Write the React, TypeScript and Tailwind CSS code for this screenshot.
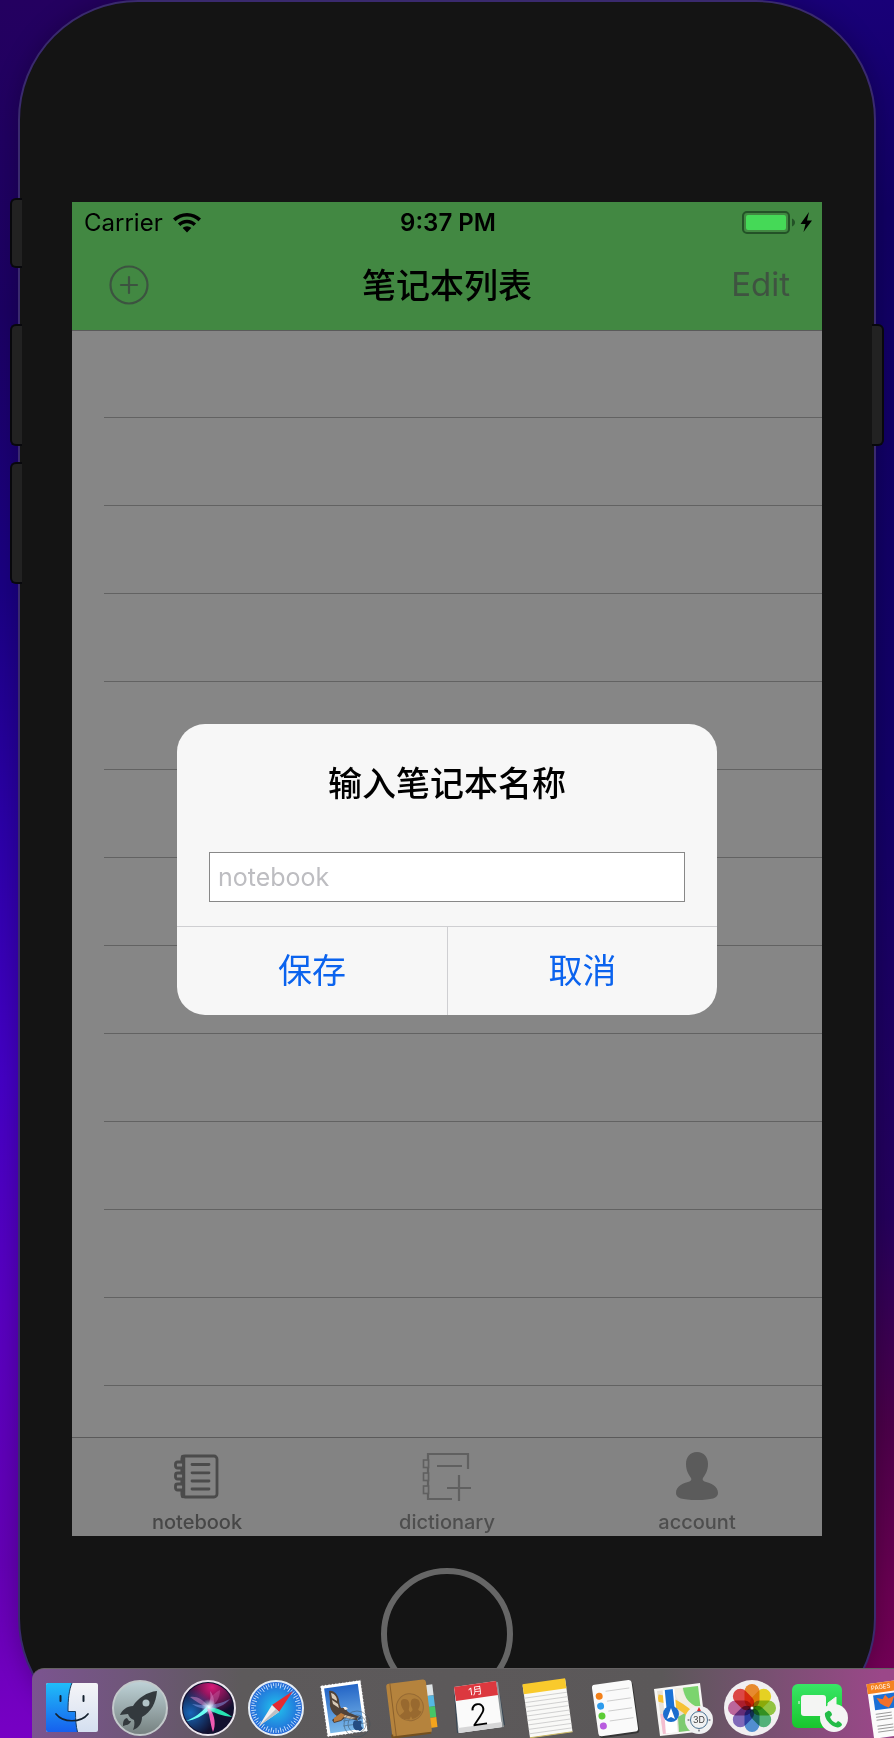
import type { ReactNode } from "react";

function Wifi() {
  return (
    <svg viewBox="0 0 28 20" className="h-5 w-7" aria-hidden="true">
      <path d="M14 0C8.600 0 3.700 2.100 0 5.600l2.500 2.600C5.500 5.300 9.500 3.600 14 3.600s8.500 1.700 11.500 4.600L28 5.600C24.300 2.100 19.400 0 14 0z" />
      <path d="M14 6.700c-3.500 0-6.700 1.400-9.100 3.700l2.500 2.600c1.700-1.700 4.100-2.700 6.600-2.700s4.900 1 6.600 2.700l2.500-2.600C20.700 8.100 17.500 6.700 14 6.700z" />
      <path d="M14 13.300c-1.700 0-3.200.7-4.300 1.700L14 19.600l4.300-4.600c-1.100-1-2.600-1.700-4.300-1.700z" />
    </svg>
  );
}

function Battery() {
  return (
    <svg viewBox="0 0 70 24" className="h-6 w-[70px]" role="img" aria-label="Charging">
      <rect x="1" y="1" width="46" height="21" rx="4" fill="none" stroke="#235227" strokeWidth="2" />
      <rect x="4" y="4" width="40" height="15" rx="2" fill="#45d957" />
      <path d="M50 7.500c4 1.500 4 6.500 0 8z" fill="#235227" />
      <path d="M67 1l-8.500 12h5l-2 8L70 9.500h-5z" fill="#000" />
    </svg>
  );
}

function NotebookIcon() {
  return (
    <svg viewBox="0 0 46 46" className="h-[46px] w-[46px]" fill="none" stroke="#4b4b4b" strokeWidth="2.800" strokeLinecap="round" aria-hidden="true">
      <rect x="8" y="2" width="35" height="41" rx="3" />
      <path d="M9 3v39" strokeWidth="4.500" />
      <rect x="1.500" y="8" width="8" height="6" rx="2" fill="#838383" />
      <rect x="1.500" y="19" width="8" height="6" rx="2" fill="#838383" />
      <rect x="1.500" y="30" width="8" height="6" rx="2" fill="#838383" />
      <path d="M18 10.500h17M18 18.800h17M18 27h17M18 35h17" />
    </svg>
  );
}

function DictionaryIcon() {
  return (
    <svg viewBox="0 0 50 50" className="h-[50px] w-[50px]" fill="none" stroke="#606060" strokeWidth="2.200" aria-hidden="true">
      <path d="M46 18V3H6v45h24M15 15h25M25 37h24M37 24v26" />
      <g fill="#838383" strokeWidth="1.600">
        <rect x="1.500" y="9" width="5" height="7.500" />
        <rect x="1.500" y="22" width="5" height="7.500" />
        <rect x="1.500" y="35" width="5" height="7.500" />
      </g>
    </svg>
  );
}

function AccountIcon() {
  return (
    <svg viewBox="0 0 42 48" className="h-12 w-[42px]" fill="#5b5b5b" aria-hidden="true">
      <path d="M21 0c7 0 11 5 11 12 0 7-3 11-5 14-.8 1.500-.3 2.500 1.500 3.500C35 31 42 34 42 41c0 5-6 7-21 7S0 46 0 41c0-7 7-10 13.500-11.500 1.800-1 2.300-2 1.500-3.500-2-3-5-7-5-14C10 5 14 0 21 0z" />
    </svg>
  );
}

function Finder() {
  return (
    <svg viewBox="0 0 56 60" className="h-[60px] w-14" aria-hidden="true">
      <defs>
        <linearGradient id="finderBlue" x1="0" y1="0" x2="0" y2="1">
          <stop offset="0" stopColor="#20bdf8" />
          <stop offset="1" stopColor="#1660ee" />
        </linearGradient>
        <linearGradient id="finderPale" x1="0" y1="0" x2="0" y2="1">
          <stop offset="0" stopColor="#f5f5f8" />
          <stop offset="1" stopColor="#d4dff0" />
        </linearGradient>
      </defs>
      <rect x="2" y="5" width="52" height="49" rx="2" fill="url(#finderPale)" />
      <path d="M28 5H4a2 2 0 0 0-2 2v45a2 2 0 0 0 2 2h29.500c-1.500-6-2-12-2-20.500h-7.500C24 21 25 12 28 5z" fill="url(#finderBlue)" />
      <path d="M28 5c-3 7-4 16-4 28.500h7.500c0 8.500.5 14.500 2 20.500" fill="none" stroke="#173d62" strokeWidth="1" />
      <path d="M16.500 18v5M39.500 18v5" stroke="#14212e" strokeWidth="2" strokeLinecap="round" />
      <path d="M12 36c7 9 25 9 32 0" fill="none" stroke="#14212e" strokeWidth="1.700" strokeLinecap="round" />
    </svg>
  );
}

function Launchpad() {
  return (
    <svg viewBox="0 0 60 60" className="h-[60px] w-[60px]" aria-hidden="true">
      <defs>
        <linearGradient id="launch" x1="0" y1="0" x2="0" y2="1">
          <stop offset="0" stopColor="#bfd3d8" />
          <stop offset="1" stopColor="#75807f" />
        </linearGradient>
      </defs>
      <circle cx="30" cy="30" r="27" fill="url(#launch)" stroke="#c3c9cb" strokeWidth="2" />
      <path d="M47 13c-10 1-19 7-24 15-6 0-11 4-13 9l8-1c1 3 3 5 6 6 1 4 0 7-1 10 6-2 9-7 9-13 9-5 14-14 15-26z" fill="#33393d" />
      <circle cx="36" cy="25" r="3.500" fill="#b2c3c7" />
      <path d="M17 40c-4 1-4 5-4 8 3-1 7-1 8-5l-2 0z" fill="#33393d" />
    </svg>
  );
}

function Siri() {
  return (
    <svg viewBox="0 0 60 60" className="h-[60px] w-[60px]" aria-hidden="true">
      <defs>
        <radialGradient id="siriPink" cx=".58" cy=".08" r=".55">
          <stop offset="0" stopColor="#d81878" />
          <stop offset="1" stopColor="#d81878" stopOpacity="0" />
        </radialGradient>
        <radialGradient id="siriBlue" cx=".15" cy=".6" r=".5">
          <stop offset="0" stopColor="#1866b8" />
          <stop offset="1" stopColor="#1866b8" stopOpacity="0" />
        </radialGradient>
        <radialGradient id="siriGlow">
          <stop offset="0" stopColor="#fff" />
          <stop offset="1" stopColor="#9fe8ff" stopOpacity="0" />
        </radialGradient>
      </defs>
      <circle cx="30" cy="30" r="27" fill="#12102f" stroke="#ebe6ee" strokeWidth="2" />
      <circle cx="30" cy="30" r="25" fill="url(#siriPink)" />
      <circle cx="30" cy="30" r="25" fill="url(#siriBlue)" />
      <path d="M31 29C24 20 18 18 12 19c5 4 12 8 19 12 7-3 6-12 1-18 1 5 0 11-1 16z" fill="#d889c9" opacity=".5" />
      <path d="M30 30C30 22 34 16 42 12c0 8-4 15-12 18z" fill="#d46fb4" opacity=".35" />
      <path d="M30 27C23 35 16 40 8 43c9-1 17-5 24-12z" fill="#64fff2" />
      <path d="M29 29c9 0 17 4 25 10-9-1-18-4-25-8z" fill="#27e3b3" />
      <path d="M29 31c3 6 3 14 6 23 3-7 2-16-3-23z" fill="#f05bb2" />
      <path d="M14 26c11 2 24 2 38-5-9 11-26 13-38 5z" fill="#8caeff" opacity=".45" />
      <circle cx="31" cy="29" r="8" fill="url(#siriGlow)" />
    </svg>
  );
}

const ticks = Array.from({ length: 60 }, (_, i) => i * 6);

function Safari() {
  return (
    <svg viewBox="0 0 60 60" className="h-[60px] w-[60px]" aria-hidden="true">
      <defs>
        <radialGradient id="safari">
          <stop offset="0" stopColor="#21c5ed" />
          <stop offset="1" stopColor="#2364d7" />
        </radialGradient>
      </defs>
      <circle cx="30" cy="30" r="27" fill="url(#safari)" stroke="#e5edf5" strokeWidth="2" />
      <g stroke="#d9ecff" strokeWidth=".8">
        {ticks.map((a) => (
          <path key={a} d={a % 12 === 0 ? "M30 5v5" : "M30 5v3"} transform={`rotate(${a} 30 30)`} />
        ))}
      </g>
      <path d="M47 13L26 27l7 7z" fill="#e62a31" />
      <path d="M13 48l13-21 7 7z" fill="#f3efee" />
      <path d="M13 48l17-17 3 3z" fill="#bebfc3" />
    </svg>
  );
}

function Mail() {
  return (
    <svg viewBox="0 0 60 60" className="h-[60px] w-[60px]" aria-hidden="true">
      <defs>
        <linearGradient id="mail" x1="0" y1="0" x2="0" y2="1">
          <stop offset="0" stopColor="#2465c6" />
          <stop offset="1" stopColor="#7bb9ea" />
        </linearGradient>
      </defs>
      <g transform="rotate(-8 30 30)">
        <rect x="9" y="4" width="42" height="53" fill="#fff" />
        <rect x="9" y="4" width="42" height="53" fill="none" stroke="#5d5a5b" strokeWidth="2" strokeDasharray="1.500 2" strokeLinecap="round" />
        <rect x="13" y="8" width="34" height="45" fill="url(#mail)" />
      </g>
      <path d="M15 13c5-1 9 4 10 9 0 3 1 6 2 8l4 0c2 2 2 4 5 5l10 4-3 1 1 3-6-2-7-1-4 3-7 2-2-3 5-4c-5-3-8-9-7-14z" fill="#514238" />
      <path d="M17 15c4 1 6 4 6 8l-5-3zM18 22l6 4 1 4-6-4z" fill="#d9cbb9" />
      <path d="M31 37l11 3-5 1-8-2z" fill="#ccb89e" />
      <path d="M20 40l7-5 4 2-4 5-7 2z" fill="#b87a3e" />
      <path d="M29 29l3 0 2 2-3 1z" fill="#f4ece0" />
      <g fill="none" stroke="#3d505e" opacity=".5">
        <circle cx="43" cy="46" r="13" />
        <circle cx="43" cy="46" r="9" />
        <path d="M29 43l20-3M29 48l22-3" />
      </g>
      <path d="M40 43c2-1 4 0 4 0s3-1 4 1c-2 2-1 5 1 6-2 4-4 3-5 2-2 1-5-1-5-5 0-2 0-3 1-4zM44 42c0-2 1-3 3-4 0 2-1 4-3 4z" fill="#244d83" />
    </svg>
  );
}

function Contacts() {
  return (
    <svg viewBox="0 0 60 60" className="h-[60px] w-[60px]" aria-hidden="true">
      <g transform="rotate(-7 30 30)">
        <rect x="44" y="9" width="9" height="11" fill="#dde2e4" />
        <rect x="44" y="20" width="9" height="11" fill="#55b8e4" />
        <rect x="44" y="31" width="9" height="11" fill="#45c667" />
        <rect x="44" y="42" width="9" height="10" fill="#f3a31c" />
        <rect x="7" y="3" width="40" height="54" rx="3" fill="#b5833d" />
        <path d="M11 3v54" stroke="#8b602b" />
        <path d="M7 54v2q0 1 2 1h37" fill="none" stroke="#74501f" strokeWidth="2" />
        <circle cx="28" cy="29" r="13.500" fill="#af7e3a" stroke="#966a34" />
        <path d="M23 20c5 0 6 5 4 10-1 2 0 3 1 4 2-1 3-2 2-4-2-5 0-10 4-9 6 1 5 8 2 11 0 2 2 2 3 3-3 4-6 6-10 6l-1-3-2 3c-4 0-8-2-9-5 2-2 4-2 5-4-3-5-4-12 1-12z" fill="#98692f" />
      </g>
    </svg>
  );
}

function Calendar() {
  return (
    <div className="relative h-[60px] w-[60px]">
      <svg viewBox="0 0 60 60" className="h-[60px] w-[60px]" aria-hidden="true">
        <path d="M4 13l44-8 7 42-48 8z" fill="#354452" />
        <path d="M5 11l43-7 6 45-46 6z" fill="#8f9699" />
        <path d="M4 9l42-6 6 46-43 6z" fill="#fafafa" />
        <path d="M4 9l42-6 2 14-42 6z" fill="#dc383f" />
        <path d="M8 50l44-6v5l-43 6z" fill="#d6d6d7" />
      </svg>
      <div className="absolute inset-0 flex -rotate-8 flex-col items-center pt-1 pr-1 text-center">
        <span className="text-[10px] leading-4 text-white">1月</span>
        <span className="text-[30px] leading-8 font-light text-black">2</span>
      </div>
    </div>
  );
}

function Notes() {
  return (
    <svg viewBox="0 0 60 60" className="h-[60px] w-[60px]" aria-hidden="true">
      <g transform="rotate(-8 30 30)">
        <rect x="8" y="4" width="43" height="53" fill="#f9f9f7" />
        <rect x="8" y="3" width="43" height="10" fill="#f9ca2c" />
        <path d="M8 17h43M8 21.500h43M8 26h43M8 30.500h43M8 35h43M8 39.500h43M8 44h43M8 48.500h43M8 53h43" stroke="#c9c9c9" strokeWidth=".8" />
        <path d="M8 57h43" stroke="#c9b763" />
      </g>
    </svg>
  );
}

function Reminders() {
  return (
    <svg viewBox="0 0 60 60" className="h-[60px] w-[60px]" aria-hidden="true">
      <g transform="rotate(-8 30 30)">
        <rect x="10" y="6" width="40" height="52" rx="3" fill="#353535" />
        <rect x="9" y="4" width="40" height="52" rx="3" fill="#fafafa" />
        <path d="M22 12h24M22 22h24M22 32h24M22 42h24" stroke="#c5c5c5" strokeWidth=".8" />
        <circle cx="15" cy="16" r="3.500" fill="#f38019" />
        <circle cx="15" cy="26" r="3.500" fill="#2d9bec" />
        <circle cx="15" cy="36" r="3.500" fill="#5ccc35" />
        <circle cx="15" cy="46" r="3.500" fill="#b95cdf" />
      </g>
    </svg>
  );
}

function Maps() {
  return (
    <div className="relative h-[60px] w-[60px]">
      <svg viewBox="0 0 60 60" className="h-[60px] w-[60px]" aria-hidden="true">
        <defs>
          <clipPath id="mapClip">
            <path d="M3 13l41-5 5 43-40 5z" />
          </clipPath>
        </defs>
        <path d="M0 11l46-6 6 48-46 5z" fill="#f7f6f4" />
        <g clipPath="url(#mapClip)">
          <path d="M0 0h60v60H0z" fill="#e7e2d8" />
          <path d="M28 3h25v35C36 32 29 19 28 3z" fill="#7bd46e" />
          <path d="M24 5c-1 17 12 29 30 31" fill="none" stroke="#f2eee2" strokeWidth="8" />
          <path d="M24 39l12-7 16 22H25z" fill="#7ecb71" />
          <path d="M3 36h12v22H3z" fill="#f4bed0" />
          <path d="M4 20c13 2 25 8 36 20" fill="none" stroke="#f6c234" strokeWidth="7" />
          <path d="M14 4l4 53" stroke="#fff" strokeWidth="12" />
          <path d="M14 4l3 31" stroke="#1972d5" strokeWidth="8" />
        </g>
        <circle cx="17" cy="36" r="8" fill="#1b6dce" />
        <path d="M17 30l4 11-4-2-4 2z" fill="#fff" />
        <circle cx="45" cy="42" r="14" fill="#f0f1f2" />
        <circle cx="45" cy="42" r="8.500" fill="none" stroke="#4b7191" />
        <path d="M45 29l2 4h-4z" fill="#e42d2c" />
        <path d="M34 42h1M55 42h1M45 52v1" stroke="#334" strokeLinecap="round" />
      </svg>
      <span className="absolute top-[35px] left-[37px] w-4 text-center text-[9px] leading-[14px] text-[#3a3a3a]">3D</span>
    </div>
  );
}

const petals = ["#f59331", "#f3df25", "#9bd044", "#58bd80", "#5798dc", "#8770c4", "#c66da4", "#e94b49"];

function Photos() {
  return (
    <svg viewBox="0 0 60 60" className="h-[60px] w-[60px]" aria-hidden="true">
      <circle cx="30" cy="30" r="28" fill="#f1eff1" />
      {petals.map((c, i) => (
        <rect key={c} x="22.500" y="6" width="15" height="24" rx="7.500" fill={c} className="mix-blend-multiply" transform={`rotate(${i * 45} 30 30)`} />
      ))}
      <circle cx="30" cy="30" r="1.500" fill="#fff" />
    </svg>
  );
}

function FaceTime() {
  return (
    <svg viewBox="0 0 60 60" className="h-[60px] w-[60px]" aria-hidden="true">
      <defs>
        <linearGradient id="face" x1="0" y1="0" x2="0" y2="1">
          <stop offset="0" stopColor="#38e666" />
          <stop offset="1" stopColor="#18c62d" />
        </linearGradient>
      </defs>
      <rect x="2" y="6" width="50" height="44" rx="6" fill="url(#face)" />
      <rect x="11" y="17" width="25" height="21" rx="3" fill="#f4f5f3" />
      <path d="M9 23v3M38 25l8-6v16l-8-6z" fill="#f4f5f3" stroke="#f4f5f3" />
      <circle cx="44" cy="40" r="14" fill="#f4f5f4" />
      <path d="M38 33c2-1 4 2 4 4l-2 2c1 3 3 5 6 6l2-2c2 1 4 2 4 4-2 3-5 3-9 1-5-3-9-9-8-13z" fill="#22bc47" />
    </svg>
  );
}

function Pages() {
  return (
    <div className="relative h-[60px] w-[60px]">
      <svg viewBox="0 0 60 60" className="h-[60px] w-[60px]" aria-hidden="true">
        <g transform="rotate(-8 34 30)">
          <rect x="12" y="3" width="44" height="55" fill="#fbfbfb" />
          <rect x="12" y="3" width="44" height="10" fill="#f48220" />
          <rect x="17" y="15" width="24" height="15" fill="#1b70d6" />
          <path d="M20 18l6 2 3-4 3 4 6-2-3 6-4 5-4-2-4-3z" fill="#f4702b" />
          <path d="M17 34h16M17 37h16M17 40h16M17 46h16M17 49h16M17 52h16M36 34h16M36 37h16" stroke="#888" strokeWidth=".8" />
        </g>
      </svg>
      <span className="absolute top-1 left-[13px] -rotate-8 text-[6px] leading-[10px] text-white">PAGES</span>
    </div>
  );
}

function DockItem({ name, children }: { name: string; children: ReactNode }) {
  return (
    <button type="button" aria-label={name} className="flex w-[60px] shrink-0 justify-center">
      {children}
    </button>
  );
}

function Dock() {
  return (
    <nav aria-label="Dock" className="absolute right-0 bottom-0 left-8 flex h-[70px] gap-2 overflow-hidden rounded-tl-xl border-t border-[#656263] bg-[linear-gradient(90deg,#7b5490_0px,#70567b_90px,#5d5a5b_210px,#5b5859_630px,#765170_730px,#9b4789_850px)] pt-[9px] pl-[10px]">
      <DockItem name="Finder"><Finder /></DockItem>
      <DockItem name="Launchpad"><Launchpad /></DockItem>
      <DockItem name="Siri"><Siri /></DockItem>
      <DockItem name="Safari"><Safari /></DockItem>
      <DockItem name="Mail"><Mail /></DockItem>
      <DockItem name="Contacts"><Contacts /></DockItem>
      <DockItem name="Calendar"><Calendar /></DockItem>
      <DockItem name="Notes"><Notes /></DockItem>
      <DockItem name="Reminders"><Reminders /></DockItem>
      <DockItem name="Maps"><Maps /></DockItem>
      <DockItem name="Photos"><Photos /></DockItem>
      <DockItem name="FaceTime"><FaceTime /></DockItem>
      <DockItem name="Pages"><Pages /></DockItem>
    </nav>
  );
}

function Alert() {
  return (
    <div className="absolute inset-0 flex items-center justify-center">
      <form role="dialog" aria-labelledby="alert-title" className="w-[540px] overflow-hidden rounded-[28px] bg-[#f7f7f7]" onSubmit={(e) => e.preventDefault()}>
        <h2 id="alert-title" className="pt-9 text-center text-[34px] leading-12 font-medium text-black">输入笔记本名称</h2>
        <div className="px-8 pt-11 pb-6">
          <input aria-label="notebook" placeholder="notebook" className="block h-[50px] w-full border border-[#888] bg-white px-2 text-[25px] text-black outline-none placeholder:text-[#bdbdc1]" />
        </div>
        <div className="grid h-[89px] grid-cols-2 border-t border-[#cfcfd2] text-[34px] text-[#0b63ee]">
          <button type="submit">保存</button>
          <button type="button" className="border-l border-[#cfcfd2]">取消</button>
        </div>
      </form>
    </div>
  );
}

const rows = Array.from({ length: 12 }, (_, i) => i);

export default function App() {
  return (
    <div className="relative overflow-hidden bg-[linear-gradient(180deg,#240060_0%,#1b0062_18%,#1a0082_34%,#2c00a8_48%,#4400c4_62%,#5800c0_75%,#6400b4_90%,#7700c4_100%)] px-[18px] font-[Inter,'Noto_Sans_CJK_SC',sans-serif]">
      <div className="absolute inset-y-0 right-0 w-1/2 bg-[linear-gradient(180deg,#190078_0%,#110063_12%,#120068_45%,#25005c_70%,#4b0049_82%,#6b0052_92%,#780058_100%)]" />
      <div className="relative rounded-[120px] border-2 border-[#3a2a6e] bg-[#141414] px-[52px] pt-[200px] pb-[200px] shadow-[0_0_24px_#00000040]">
        <div className="absolute top-[196px] -left-[10px] h-[70px] w-3 rounded-l-md border-2 border-r-0 border-[#08080c] bg-[#222]" />
        <div className="absolute top-[322px] -left-[10px] h-[122px] w-3 rounded-l-md border-2 border-r-0 border-[#08080c] bg-[#222]" />
        <div className="absolute top-[460px] -left-[10px] h-[122px] w-3 rounded-l-md border-2 border-r-0 border-[#08080c] bg-[#222]" />
        <div className="absolute top-[322px] -right-[10px] h-[122px] w-3 rounded-r-md border-2 border-l-0 border-[#08080c] bg-[#222]" />

        <main className="relative flex min-h-[1334px] flex-col bg-[#868686]">
          <header className="relative h-32 bg-[#428842] text-black shadow-[0_1px_0_#5a5a5a]">
            <div className="grid h-[42px] grid-cols-3 items-center pr-[10px] pl-3 text-2xl">
              <div className="flex items-center gap-[10px]">
                <span>Carrier</span>
                <Wifi />
              </div>
              <span className="text-center font-semibold">9:37 PM</span>
              <div className="flex justify-end">
                <Battery />
              </div>
            </div>
            <div className="grid h-[82px] grid-cols-3 items-center px-8 text-[34px]">
              <button type="button" aria-label="Add notebook" className="w-fit pl-1">
                <svg viewBox="0 0 42 42" className="h-[42px] w-[42px]" fill="none" stroke="#3c5340" strokeWidth="2.200" strokeLinecap="round">
                  <circle cx="21" cy="21" r="18.500" />
                  <path d="M13 21h16M21 13v16" />
                </svg>
              </button>
              <h1 className="text-center font-medium whitespace-nowrap">笔记本列表</h1>
              <button type="button" className="text-right text-[33px] text-[#3f5341]">Edit</button>
            </div>
          </header>

          <ul className="grow pl-8">
            {rows.map((r) => (
              <li key={r} className="h-[88px] border-b border-[#626262]" />
            ))}
          </ul>

          <nav aria-label="Tabs" className="grid h-[99px] grid-cols-3 border-t border-[#5a5a5a] bg-[#838383] text-xl font-medium text-[#4e4e4e]">
            <a href="#notebook" className="flex flex-col items-center justify-between pt-4 text-[#474747]">
              <NotebookIcon />
              <span className="leading-7">notebook</span>
            </a>
            <a href="#dictionary" className="flex flex-col items-center justify-between pt-[13px]">
              <DictionaryIcon />
              <span className="leading-7">dictionary</span>
            </a>
            <a href="#account" className="flex flex-col items-center justify-between pt-[14px]">
              <AccountIcon />
              <span className="leading-7">account</span>
            </a>
          </nav>
          <Alert />
        </main>
        <div className="absolute bottom-[36px] left-1/2 size-[132px] -translate-x-1/2 rounded-full border-[6px] border-[#666]" />
      </div>
      <Dock />
    </div>
  );
}
